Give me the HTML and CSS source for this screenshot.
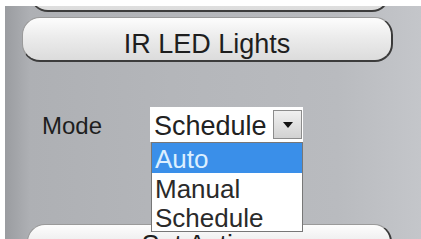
FILE: index.html
```html
<!DOCTYPE html>
<html lang="en">
<head>
    <meta charset="UTF-8">
    <title>IR LED Lights</title>
    <link rel="stylesheet" href="styles.css">
</head>
<body>
    <div class="panel">
        <div class="btn btn-top"></div>
        <div class="btn btn-ir">IR LED Lights</div>

        <div class="mode-row">
            <span class="mode-label">Mode</span>
            <div class="select">
                <span class="select-value">Schedule</span>
                <span class="select-arrow"></span>
            </div>
            <ul class="select-list">
                <li class="active">Auto</li>
                <li>Manual</li>
                <li>Schedule</li>
            </ul>
        </div>

        <div class="btn btn-bottom">Set Actions</div>
    </div>
</body>
</html>
```

FILE: styles.css
```css
body {
    margin: 0;
    padding: 6px 0 0 5px;
    background-color: #fff;
    height: 239px;
    box-sizing: border-box;
    overflow: hidden;
    font-family: "Liberation Sans", Arial, sans-serif;
}

/* gray settings panel */
.panel {
    height: 233px;
    overflow: hidden;
    background: linear-gradient(to right, #9a9ca0 0, #aeb0b4 6%, #b4b6ba 40%, #b9bbbf 80%, #c4c6ca 100%);
}

/* rounded buttons */
.btn {
    box-sizing: border-box;
    height: 45px;
    border: 1px solid #9a9a9a;
    border-bottom: 2px solid #3c3c3c;
    border-right: 2px solid #3a3a3a;
    border-radius: 18px;
    background: linear-gradient(#fdfdfd, #ececec 45%, #dcdcdc 100%);
    color: #1e1e1e;
    font-size: 27px;
    display: flex;
    justify-content: center;
    padding-top: 7px;
}
.btn-top {
    margin: -39px 0 0 25px;
    width: 360px;
}
.btn-ir {
    margin: 5px 0 0 17px;
    width: 371px;
    padding-top: 10px;
    align-items: center;
}
.btn-bottom {
    margin: 82px 0 0 22px;
    width: 365px;
    padding-top: 5px;
}

/* Mode select */
.mode-row {
    position: relative;
    display: flex;
    align-items: flex-end;
    margin-top: 45px;
    padding-left: 37px;
    height: 35px;
}
.mode-label {
    width: 108px;
    font-size: 24px;
    color: #1e1e1e;
    line-height: 24px;
    padding-bottom: 4px;
}
.select {
    display: flex;
    align-items: center;
    width: 153px;
    height: 35px;
    background-color: #fff;
}
.select-value {
    flex: 1;
    font-size: 27px;
    color: #222;
    padding-left: 4px;
    padding-top: 3px;
}
.select-arrow {
    position: relative;
    width: 29px;
    height: 29px;
    margin-right: 1px;
    box-sizing: border-box;
    border: 1px solid #8c8c8c;
    background: linear-gradient(#f0f0f0, #d2d2d2);
}
.select-arrow::after {
    content: "";
    position: absolute;
    left: 9px;
    top: 11px;
    border-left: 5px solid transparent;
    border-right: 5px solid transparent;
    border-top: 6px solid #111;
}

/* open dropdown */
.select-list {
    position: absolute;
    left: 146px;
    top: 35px;
    width: 152px;
    margin: 0;
    padding: 0;
    list-style: none;
    background-color: #fff;
    border: 1px solid #777;
    box-sizing: border-box;
    z-index: 10;
}
.select-list li {
    height: 30px;
    line-height: 32px;
    padding-left: 3px;
    font-size: 26px;
    color: #2a2a2a;
}
.select-list li:last-child {
    height: 28px;
    line-height: 30px;
}
.select-list li.active {
    background-color: #3a8fe9;
    color: #dcefff;
}
```
